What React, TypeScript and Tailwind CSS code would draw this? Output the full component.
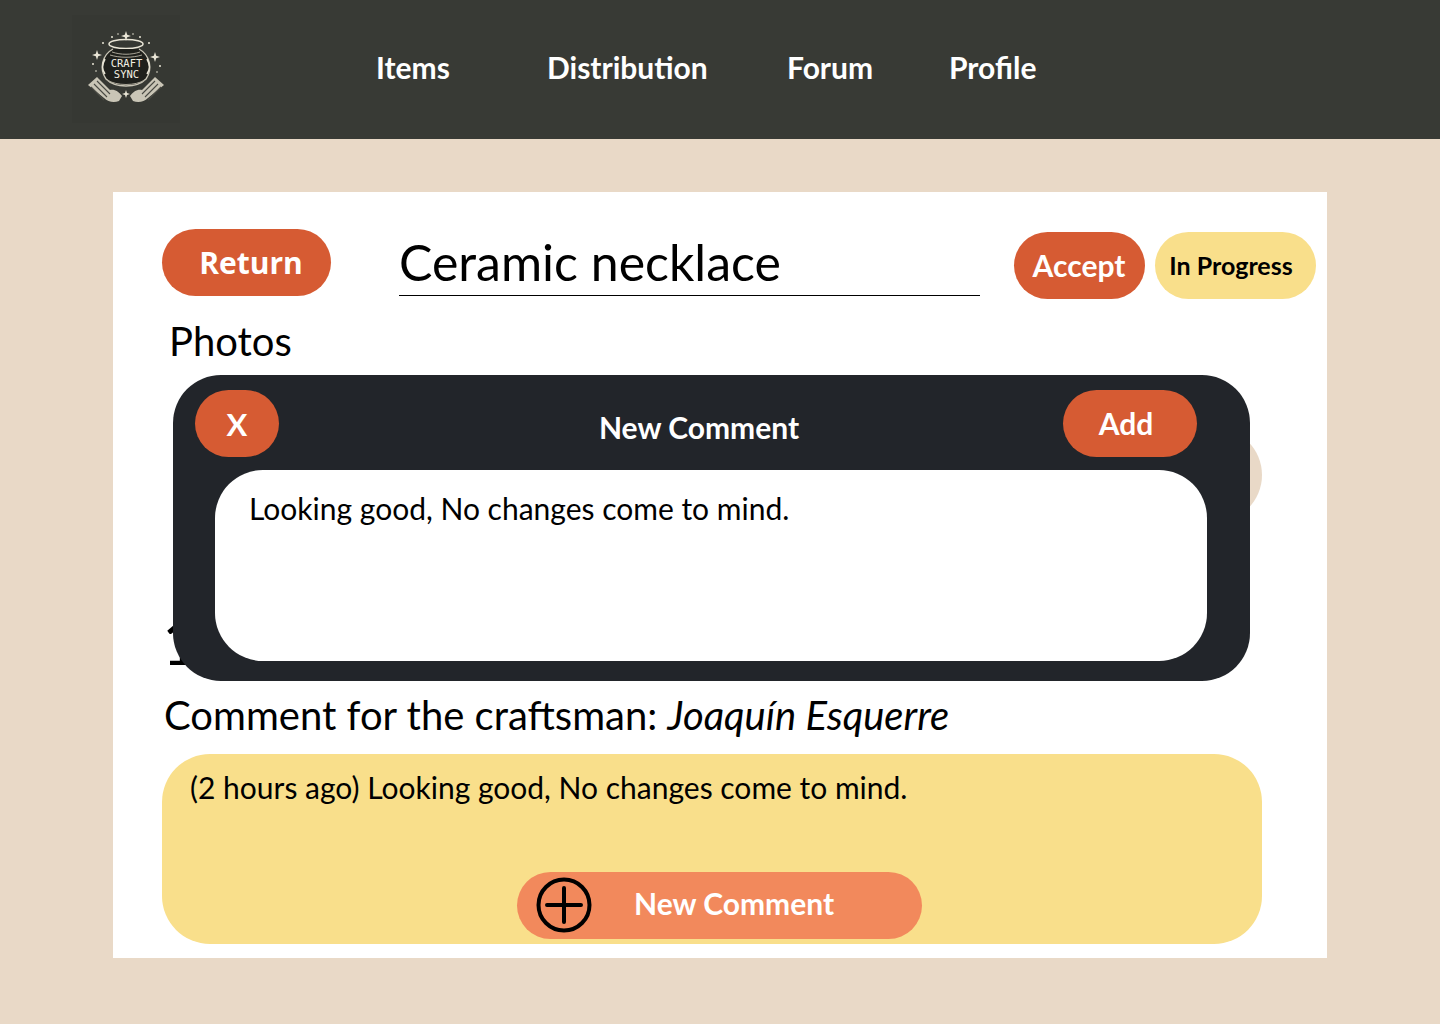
const lato = "font-['Lato','Noto_Sans',sans-serif]";

const Logo = () => (
  <div className="flex h-[108px] w-[108px] items-center justify-center bg-[#363833]">
    <svg width="76" height="76" viewBox="0 0 76 76" fill="none">
      <g fill="#e9e5d6">
        <path d="M38 0l1.2 3.8 3.8 1.2-3.8 1.2L38 10l-1.2-3.8L33 5l3.8-1.2z" />
        <path d="M9 19l1.2 3.8 3.8 1.2-3.8 1.2L9 29l-1.2-3.8L4 24l3.8-1.2z" />
        <path d="M67 21l1.2 3.8 3.8 1.2-3.8 1.2L67 31l-1.2-3.8L62 26l3.8-1.2z" />
        <path d="M38 59l1 3 3 1-3 1-1 3-1-3-3-1 3-1z" />
        <circle cx="24" cy="6" r="1" />
        <circle cx="52" cy="6" r="1" />
        <circle cx="15" cy="12" r="1" />
        <circle cx="61" cy="12" r="1" />
        <circle cx="5" cy="33" r="1" />
        <circle cx="72" cy="35" r="1" />
        <circle cx="30" cy="3" r="0.8" />
        <circle cx="45" cy="3" r="0.8" />
        <circle cx="8" cy="40" r="0.8" />
        <circle cx="69" cy="41" r="0.8" />
      </g>
      <ellipse cx="38" cy="13" rx="17" ry="4.5" stroke="#e9e5d6" strokeWidth="1.5" />
      <path d="M25 18c-11 6-14 20-7 30 5 5 12 7 20 7s15-2 20-7c7-10 4-24-7-30" fill="#1f201c" stroke="#c9c5b6" strokeWidth="1.4" />
      <path d="M24 21c9 3 19 3 28 0M22 24c10 3 22 3 32 0M19 49c10 6 28 6 38 0" stroke="#a9a597" strokeWidth="1" />
      <path d="M17 28c-3 5-3 11 0 15M59 28c3 5 3 11 0 15" stroke="#e9e5d6" strokeWidth="1.6" />
      <text x="38.5" y="36" textAnchor="middle" fill="#f2efe2" fontSize="10.5" fontFamily="'DejaVu Sans Mono', monospace">CRAFT</text>
      <text x="38.5" y="47" textAnchor="middle" fill="#f2efe2" fontSize="10.5" fontFamily="'DejaVu Sans Mono', monospace">SYNC</text>
      <path d="M0 54l9-8 13 13c5-1 9 2 12 6l-3 5c-5 2-11 1-15-3z" fill="#c9c5b6" />
      <path d="M76 54l-9-8-13 13c-5-1-9 2-12 6l3 5c5 2 11 1 15-3z" fill="#c9c5b6" />
      <path d="M3 56l13 13M6 53l13 13M9 50l13 13M73 56L60 69M70 53L57 66M67 50L54 63" stroke="#4a4b44" strokeWidth="1.1" />
    </svg>
  </div>
);

const NavLink = ({ label, className }: { label: string; className: string }) => (
  <a className={`text-[30px] leading-none font-bold text-white ${className}`}>{label}</a>
);

const App = () => {
  return (
    <div className={`${lato} h-[1024px] w-[1440px] overflow-hidden bg-[#e9d9c7] text-black`}>
      <header className="flex h-[139px] items-center bg-[#383a35] pb-[2px] pl-[72px]">
        <Logo />
        <nav className="ml-[196px] -mt-[3px] flex items-center">
          <NavLink label="Items" className="w-[171px]" />
          <NavLink label="Distribution" className="w-[240px]" />
          <NavLink label="Forum" className="w-[162px]" />
          <NavLink label="Profile" className="" />
        </nav>
      </header>

      <main className="relative mx-[113px] mt-[53px] h-[766px] bg-white pl-[49px] pt-[37px]">
        <div className="flex items-start">
          <button className="h-[67px] w-[169px] rounded-full bg-[#d65b33] pl-[9px] font-['Open_Sans',sans-serif] text-[30px] font-bold text-white">
            Return
          </button>
          <h1 className="ml-[68px] h-[67px] w-[581px] border-b border-black text-[50px] leading-[67px]">
            Ceramic necklace
          </h1>
          <button className="ml-[34px] mt-[3px] h-[67px] w-[131px] rounded-full bg-[#d65b33] pr-[1px] text-[30px] font-bold text-white">
            Accept
          </button>
          <div className="ml-[10px] mt-[3px] flex h-[67px] w-[161px] items-center justify-center rounded-full bg-[#f9df8b] pr-[9px] text-[25px] font-bold">
            In Progress
          </div>
        </div>

        <h2 className="ml-[7px] mt-[17px] text-[40px] leading-[50px]">Photos</h2>

        <div className="mt-[62px] flex justify-end pr-[65px]">
          <div className="h-[94px] w-[94px] rounded-full bg-[#e9d9c7]" />
        </div>

        <div className="ml-[8px] mt-[90px] h-[53px] w-[120px] -indent-[8px] text-[64px] leading-[58px]">1</div>

        <h2 className="ml-[2px] mt-[25px] text-[40px] leading-[50px]">
          Comment for the craftsman: <em>Joaquín Esquerre</em>
        </h2>

        <section className="relative mt-[14px] h-[190px] w-[1100px] rounded-[48px] bg-[#f9df8b] pl-[28px] pt-[13px]">
          <p className="text-[30px] leading-[40px]">(2 hours ago) Looking good, No changes come to mind.</p>
          <button className="absolute left-[355px] top-[118px] flex h-[67px] w-[405px] items-center rounded-full bg-[#f2895c] pl-[19px]">
            <svg className="-mt-[1px]" width="56" height="56" viewBox="0 0 56 56" fill="none" stroke="#000" strokeWidth="4" strokeLinecap="round">
              <circle cx="28" cy="28" r="25.5" />
              <path d="M28 11v34M11 28h34" />
            </svg>
            <span className="ml-[42px] -mt-[5px] text-[30px] font-bold text-white">New Comment</span>
          </button>
        </section>

        <div className="absolute left-[60px] top-[183px] h-[306px] w-[1077px] rounded-[48px] bg-[#22252a]">
          <button className="absolute left-[22px] top-[15px] h-[67px] w-[84px] rounded-full bg-[#d65b33] pt-[2px] text-[31px] font-bold text-white">
            X
          </button>
          <h3 className="absolute left-0 top-[32px] w-[1052px] text-center text-[30px] leading-[40px] font-bold text-white">
            New Comment
          </h3>
          <button className="absolute left-[890px] top-[15px] h-[67px] w-[134px] rounded-full bg-[#d65b33] pr-[8px] text-[30px] font-bold text-white">
            Add
          </button>
          <div className="absolute left-[42px] top-[95px] h-[191px] w-[992px] rounded-[48px] bg-white pl-[34px] pt-[18px] text-[30px] leading-[40px]">
            Looking good, No changes come to mind.
          </div>
        </div>
      </main>
    </div>
  );
};

export default App;
